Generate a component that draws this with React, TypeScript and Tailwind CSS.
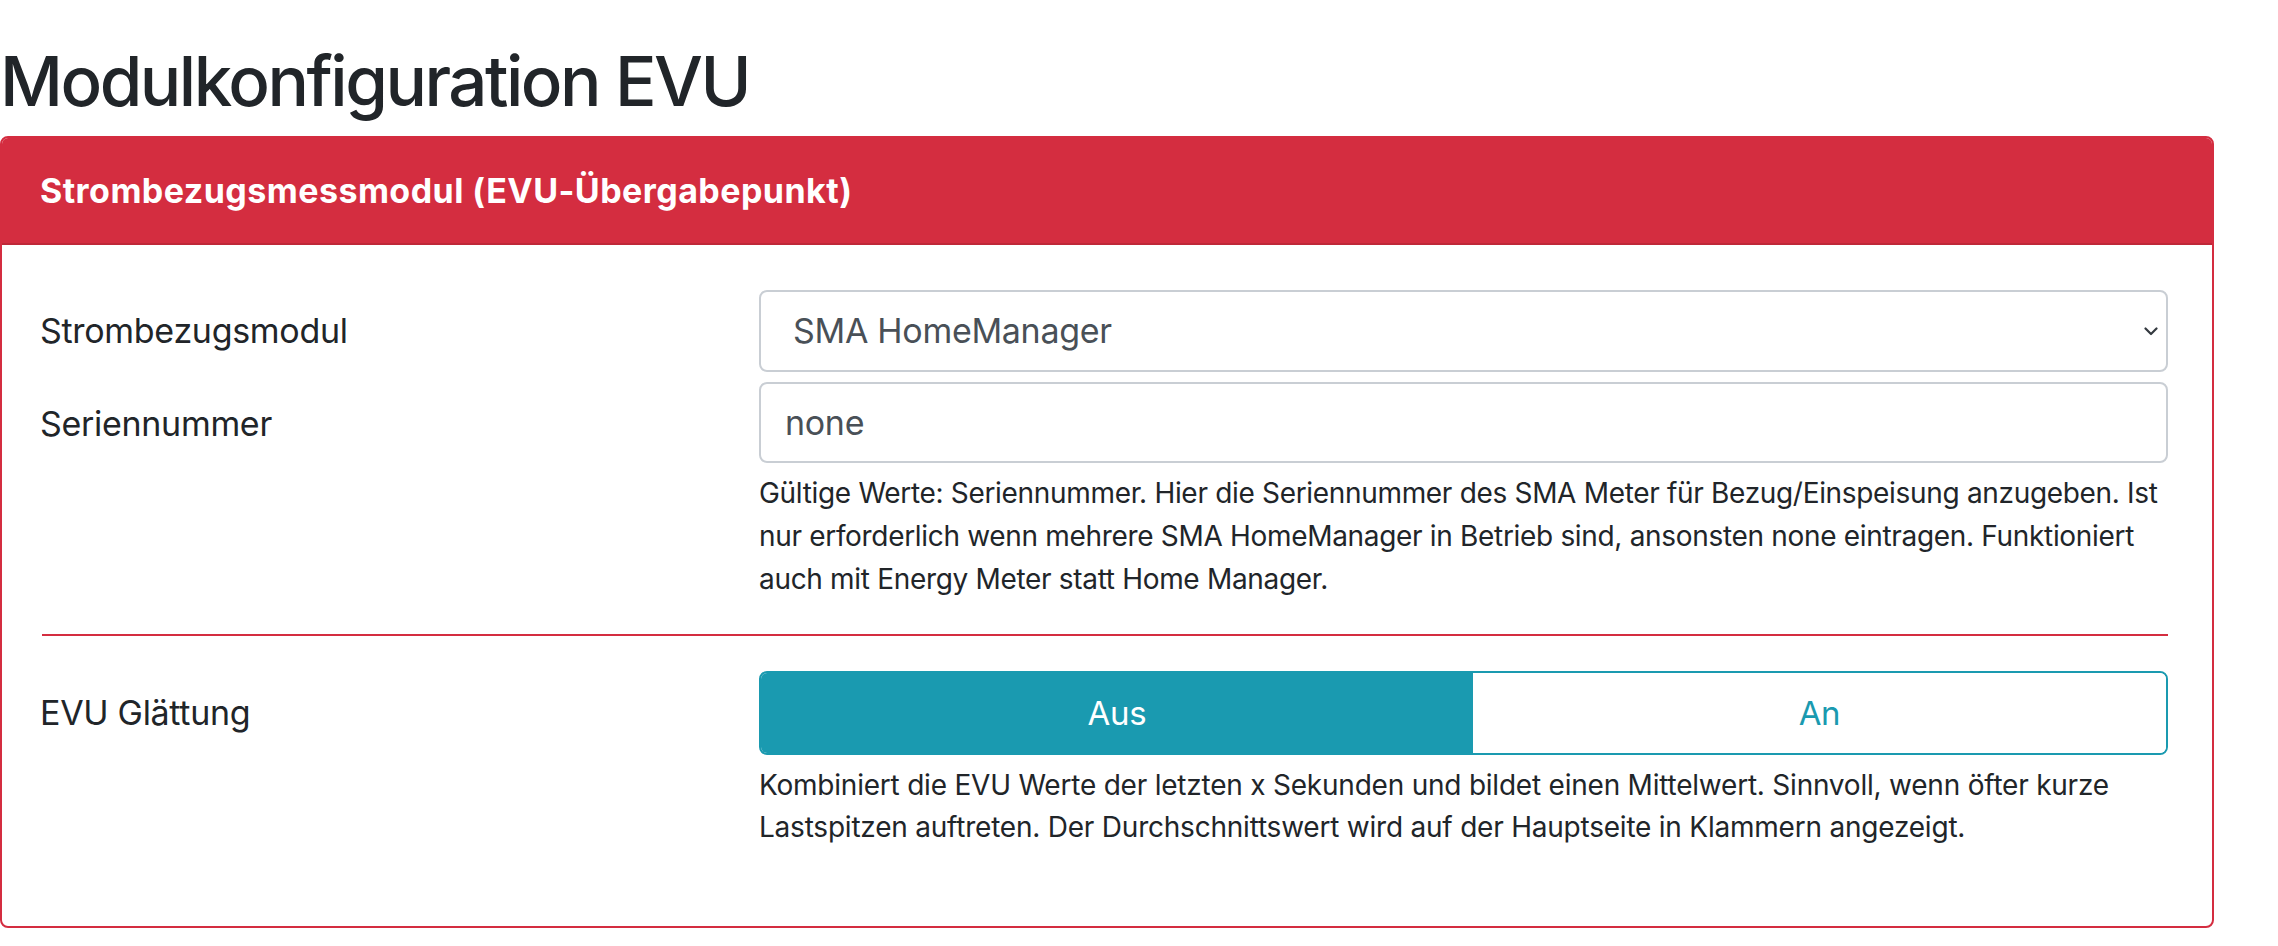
import React from "react";

const RED = "border-[#d42d40]";

function Chevron() {
  return (
    <svg width="14" height="9" viewBox="0 0 14 9" fill="none" className="shrink-0">
      <path d="M1.5 1.5 L7 7 L12.5 1.5" stroke="#343a40" strokeWidth="2.2" strokeLinecap="round" strokeLinejoin="round" />
    </svg>
  );
}

export default function App() {
  return (
    <div className="w-[2278px] h-[946px] overflow-hidden bg-white text-[#212529] font-['Inter','Noto_Sans',sans-serif]">
      <h1 className="pt-[39px] text-[69px] leading-[84px] font-medium tracking-[-2.5px] whitespace-nowrap">
        Modulkonfiguration EVU
      </h1>
      <div className={`mt-[13px] w-[2214px] border-2 ${RED} rounded-[8px] overflow-hidden`}>
        <div className="h-[107px] bg-[#d42d40] border-b-2 border-[#bf2838] flex items-center pl-[38px]">
          <span className="text-white font-bold text-[34px] leading-[40px] tracking-[0.45px]">
            Strombezugsmessmodul (EVU-Übergabepunkt)
          </span>
        </div>
        <div className="pl-[38px] pr-[44px] pt-[45px] pb-[78px]">
          <div className="grid grid-cols-[719px_1fr] items-center">
            <div className="text-[34px] leading-[40px] tracking-[-0.3px]">Strombezugsmodul</div>
            <div className="h-[82px] border-2 border-[#c9ced4] rounded-[8px] flex items-center justify-between pl-[32px] pr-[8px]">
              <span className="text-[34px] leading-[40px] text-[#495057] tracking-[-0.3px]">SMA HomeManager</span>
              <Chevron />
            </div>
          </div>
          <div className="grid grid-cols-[719px_1fr] mt-[10px]">
            <div className="h-[81px] flex items-center text-[34px] leading-[40px] tracking-[-0.3px] pt-[3px]">Seriennummer</div>
            <div>
              <div className="h-[81px] border-2 border-[#c9ced4] rounded-[8px] flex items-center pl-[24px]">
                <span className="text-[34px] leading-[40px] text-[#495057] tracking-[-0.3px]">none</span>
              </div>
              <div className="mt-[9px] text-[28px] leading-[43px] tracking-[-0.32px] whitespace-nowrap">
                <div>Gültige Werte: Seriennummer. Hier die Seriennummer des SMA Meter für Bezug/Einspeisung anzugeben. Ist</div>
                <div>nur erforderlich wenn mehrere SMA HomeManager in Betrieb sind, ansonsten none eintragen. Funktioniert</div>
                <div>auch mit Energy Meter statt Home Manager.</div>
              </div>
            </div>
          </div>
          <div className="mt-[33px] ml-[2px] h-[2px] bg-[#d42d40]" />
          <div className="grid grid-cols-[719px_1fr] mt-[35px]">
            <div className="h-[84px] flex items-center text-[34px] leading-[40px] tracking-[-0.3px]">EVU Glättung</div>
            <div>
              <div className="h-[84px] flex rounded-[8px] overflow-hidden border-2 border-[#1a9ab0]">
                <div className="w-[712px] shrink-0 bg-[#1a9ab0] text-white flex items-center justify-center text-[33px] leading-[40px] tracking-[-0.3px]">
                  Aus
                </div>
                <div className="flex-1 bg-white text-[#1a9ab0] flex items-center justify-center text-[33px] leading-[40px] tracking-[-0.3px]">
                  An
                </div>
              </div>
              <div className="mt-[9px] text-[28px] leading-[42px] tracking-[-0.22px] whitespace-nowrap">
                <div>Kombiniert die EVU Werte der letzten x Sekunden und bildet einen Mittelwert. Sinnvoll, wenn öfter kurze</div>
                <div>Lastspitzen auftreten. Der Durchschnittswert wird auf der Hauptseite in Klammern angezeigt.</div>
              </div>
            </div>
          </div>
        </div>
      </div>
    </div>
  );
}
